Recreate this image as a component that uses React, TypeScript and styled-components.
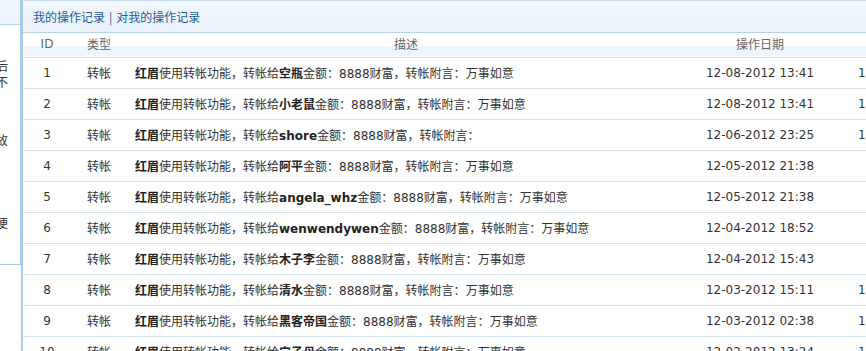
import React from "react";
import styled, { createGlobalStyle } from "styled-components";

const Global = createGlobalStyle`
  html, body { margin: 0; padding: 0; background: #fff; overflow: hidden; }
  body { font-family: "DejaVu Sans", "Noto Sans CJK SC", sans-serif; font-size: 12px; color: #333; }
`;

const Page = styled.div`
  display: flex;
  width: 866px;
  height: 351px;
  overflow: hidden;
`;

const Sidebar = styled.div`
  flex: 0 0 20px;
  height: 264px;
  border-right: 1px solid #a9cbe4;
  border-bottom: 1px solid #a9cbe4;
  overflow: hidden;
  display: flex;
  flex-direction: column;
`;

const SideTop = styled.div`
  height: 24px;
  background: #edf4fb;
  border-bottom: 1px solid #b7d1e7;
`;

const SideLine = styled.div<{ $mt: number }>`
  display: flex;
  justify-content: flex-end;
  white-space: nowrap;
  padding-right: 12px;
  margin-top: ${(p) => p.$mt}px;
  height: 17px;
  line-height: 17px;
  font-family: "Noto Sans CJK SC", sans-serif;
  color: #333;
`;

const Main = styled.div`
  flex: 0 0 auto;
  width: 900px;
  border-left: 2px solid #a9cbe4;
  border-top: 1px solid #c5dbec;
`;

const TabBar = styled.div`
  height: 31px;
  background: linear-gradient(#f0f6fc, #e9f2fa);
  border-bottom: 1px solid #b7d1e7;
  display: flex;
  align-items: center;
  padding-left: 10px;
  font-family: "Noto Sans CJK SC", sans-serif;
  color: #1f5c9c;
`;

const TabLink = styled.span`
  color: #1f5c9c;
`;

const Sep = styled.span`
  margin: 0 4px;
  color: #1f5c9c;
`;

const Table = styled.table`
  border-collapse: collapse;
  table-layout: fixed;
  width: 900px;
`;

const HeadRow = styled.tr`
  height: 24px;
  background: linear-gradient(#ffffff 0%, #ffffff 55%, #eef5fc 62%, #eef5fc 100%);
  border-bottom: 1px solid #d3e3ef;
`;

const Th = styled.th<{ $align?: string; $pl?: number }>`
  font-weight: normal;
  color: #666;
  font-family: "DejaVu Sans", "Noto Sans CJK SC", sans-serif;
  text-align: ${(p) => p.$align || "center"};
  padding: 0 0 2px ${(p) => p.$pl || 0}px;
`;

const Row = styled.tr`
  height: 31px;
  border-bottom: 1px solid #d3e3ef;
`;

const Td = styled.td<{ $align?: string; $pl?: number }>`
  text-align: ${(p) => p.$align || "center"};
  padding: 0 0 0 ${(p) => p.$pl || 0}px;
  white-space: nowrap;
  overflow: hidden;
  color: #333;
  vertical-align: middle;
`;

const Name = styled.b`
  font-weight: bold;
  color: #222;
`;

const Num = styled.span`
  color: #333;
`;

type R = { id: number; name: string; msg: string; date: string; extra: boolean };

const rows: R[] = [
  { id: 1, name: "空瓶", msg: "万事如意", date: "12-08-2012 13:41", extra: true },
  { id: 2, name: "小老鼠", msg: "万事如意", date: "12-08-2012 13:41", extra: true },
  { id: 3, name: "shore", msg: "", date: "12-06-2012 23:25", extra: true },
  { id: 4, name: "阿平", msg: "万事如意", date: "12-05-2012 21:38", extra: false },
  { id: 5, name: "angela_whz", msg: "万事如意", date: "12-05-2012 21:38", extra: false },
  { id: 6, name: "wenwendywen", msg: "万事如意", date: "12-04-2012 18:52", extra: false },
  { id: 7, name: "木子李", msg: "万事如意", date: "12-04-2012 15:43", extra: false },
  { id: 8, name: "清水", msg: "万事如意", date: "12-03-2012 15:11", extra: true },
  { id: 9, name: "黑客帝国", msg: "万事如意", date: "12-03-2012 02:38", extra: true },
  { id: 10, name: "宁子母", msg: "万事如意", date: "12-02-2012 13:24", extra: true },
];

export default function App() {
  return (
    <>
      <Global />
      <Page>
        <Sidebar>
          <SideTop />
          <SideLine $mt={32}>请后</SideLine>
          <SideLine $mt={-1}>不</SideLine>
          <SideLine $mt={41}>故</SideLine>
          <SideLine $mt={66}>便</SideLine>
        </Sidebar>
        <Main>
          <TabBar>
            <TabLink>我的操作记录</TabLink>
            <Sep>|</Sep>
            <TabLink>对我的操作记录</TabLink>
          </TabBar>
          <Table>
            <colgroup>
              <col style={{ width: 48 }} />
              <col style={{ width: 59 }} />
              <col style={{ width: 552 }} />
              <col style={{ width: 156 }} />
              <col style={{ width: 85 }} />
            </colgroup>
            <thead>
              <HeadRow>
                <Th>ID</Th>
                <Th $align="left" $pl={16}>类型</Th>
                <Th>描述</Th>
                <Th>操作日期</Th>
                <Th />
              </HeadRow>
            </thead>
            <tbody>
              {rows.map((r) => (
                <Row key={r.id}>
                  <Td>{r.id}</Td>
                  <Td $align="left" $pl={16}>转帐</Td>
                  <Td $align="left" $pl={5}>
                    <Name>红眉</Name>使用转帐功能，转帐给<Name>{r.name}</Name>金额：<Num>8888</Num>财富，转帐附言：{r.msg}
                  </Td>
                  <Td>{r.date}</Td>
                  <Td $align="left" $pl={20}>{r.extra ? "1" : ""}</Td>
                </Row>
              ))}
            </tbody>
          </Table>
        </Main>
      </Page>
    </>
  );
}
